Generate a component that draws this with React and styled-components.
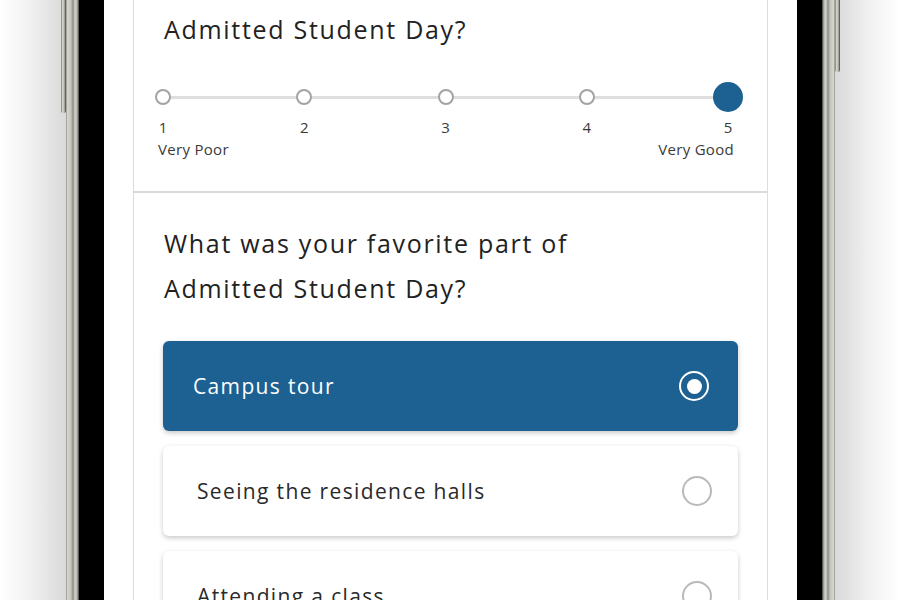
import React from "react";
import styled, { createGlobalStyle } from "styled-components";

const Global = createGlobalStyle`
    html, body { margin: 0; padding: 0; }
    body {
        width: 900px;
        height: 600px;
        overflow: hidden;
        font-family: "Open Sans", "Liberation Sans", sans-serif;
        background: #fff;
    }
`;

const Page = styled.div`
    height: 600px;
    display: flex;
    justify-content: center;
    background: linear-gradient(
        to right,
        #ffffff 0px,
        #f1f1f1 30px,
        #dadada 64px,
        #dadada 836px,
        #f1f1f1 870px,
        #ffffff 900px
    );
`;

const Phone = styled.div`
    position: relative;
    margin-left: 1px;
    width: 769px;
    display: flex;
    background: #000;
`;

const Rim = styled.div`
    width: 13px;
    flex-shrink: 0;
    background: linear-gradient(
        to ${p => (p.$side === "left" ? "right" : "left")},
        #6f6f6a 0px,
        #d8d8d0 1px,
        #c4c4bc 5px,
        #8c8c86 7px,
        #d2d2ca 9px,
        #b9b9b1 11px,
        #3a3a38 13px
    );
`;

const Bezel = styled.div`
    flex: 1;
    padding: 0 25px;
    background: #000;
    display: flex;
`;

const SideButton = styled.div`
    position: absolute;
    top: -10px;
    width: 5px;
    height: ${p => p.$h}px;
    border-radius: 0 0 2px 2px;
    background: linear-gradient(to right, #555 0, #d6d6cf 1px, #c2c2ba 3px, #444 5px);
    ${p => (p.$side === "left" ? "left: -5px;" : "right: -5px;")}
`;

const Screen = styled.div`
    flex: 1;
    background: #fff;
    overflow: hidden;
    padding: 0 29px;
`;

const Card = styled.div`
    margin-top: -66px;
    border-left: 1px solid #dcdcdc;
    border-right: 1px solid #dcdcdc;
`;

const Section = styled.div`
    padding: 28px 30px ${p => p.$bottom}px;
    & + & {
        border-top: 2px solid #dadada;
    }
`;

const Question = styled.h2`
    margin: 0;
    font-size: 25px;
    font-weight: 500;
    line-height: 45px;
    color: #222;
    letter-spacing: 1.7px;
`;

const Scale = styled.div`
    margin: 30px -6px 0 -16px;
`;

const Track = styled.div`
    position: relative;
    display: flex;
    justify-content: space-between;
    &::before {
        content: "";
        position: absolute;
        left: 15px;
        right: 15px;
        top: 14px;
        height: 3px;
        background: #dedede;
    }
`;

const Stop = styled.div`
    position: relative;
    width: 30px;
    height: 30px;
    display: flex;
    align-items: center;
    justify-content: center;
`;

const Dot = styled.span`
    box-sizing: border-box;
    width: ${p => (p.$on ? 30 : 16)}px;
    height: ${p => (p.$on ? 30 : 16)}px;
    border-radius: 50%;
    background: ${p => (p.$on ? "#1c6191" : "#fff")};
    border: ${p => (p.$on ? "none" : "2px solid #a3a3a3")};
`;

const Numbers = styled.div`
    margin-top: 5px;
    display: flex;
    justify-content: space-between;
`;

const Num = styled.span`
    width: 30px;
    text-align: center;
    font-size: 15px;
    line-height: 20px;
    color: #3a3a3a;
`;

const Ends = styled.div`
    margin: 2px 9px 0 10px;
    display: flex;
    justify-content: space-between;
    font-size: 15px;
    line-height: 20px;
    letter-spacing: 0.3px;
    color: #3a3a3a;
`;

const Options = styled.div`
    margin: 30px -1px 0;
    display: flex;
    flex-direction: column;
    gap: 15px;
`;

const Option = styled.div`
    height: 90px;
    box-sizing: border-box;
    display: flex;
    align-items: center;
    justify-content: space-between;
    padding: ${p => (p.$on ? "0 29px 0 30px" : "0 26px 0 34px")};
    border-radius: 6px;
    background: ${p => (p.$on ? "#1c6191" : "#fff")};
    color: ${p => (p.$on ? "#fff" : "#2a2a2a")};
    box-shadow: 0 2px 5px rgba(0, 0, 0, 0.22);
    font-size: 21px;
    letter-spacing: 1.35px;
`;

const Radio = styled.span`
    box-sizing: border-box;
    width: 30px;
    height: 30px;
    border-radius: 50%;
    border: 2px solid ${p => (p.$on ? "#fff" : "#b9b9b9")};
    display: flex;
    align-items: center;
    justify-content: center;
    &::after {
        content: "";
        display: ${p => (p.$on ? "block" : "none")};
        width: 15px;
        height: 15px;
        border-radius: 50%;
        background: #fff;
    }
`;

const choices = [
    { label: "Campus tour", on: true },
    { label: "Seeing the residence halls" },
    { label: "Attending a class" },
];

export default function App() {
    return (
        <Page>
            <Global />
            <Phone>
                <SideButton $side="left" $h={123} />
                <SideButton $side="right" $h={82} />
                <Rim $side="left" />
                <Bezel>
                    <Screen>
                        <Card>
                            <Section $bottom={32}>
                                <Question>
                                    How was your overall experience at
                                    <br />
                                    Admitted Student Day?
                                </Question>
                                <Scale>
                                    <Track>
                                        {[1, 2, 3, 4, 5].map(n => (
                                            <Stop key={n}>
                                                <Dot $on={n === 5} />
                                            </Stop>
                                        ))}
                                    </Track>
                                    <Numbers>
                                        {[1, 2, 3, 4, 5].map(n => (
                                            <Num key={n}>{n}</Num>
                                        ))}
                                    </Numbers>
                                    <Ends>
                                        <span>Very Poor</span>
                                        <span>Very Good</span>
                                    </Ends>
                                </Scale>
                            </Section>
                            <Section $bottom={40}>
                                <Question>
                                    What was your favorite part of
                                    <br />
                                    Admitted Student Day?
                                </Question>
                                <Options>
                                    {choices.map(c => (
                                        <Option key={c.label} $on={c.on}>
                                            <span>{c.label}</span>
                                            <Radio $on={c.on} />
                                        </Option>
                                    ))}
                                </Options>
                            </Section>
                        </Card>
                    </Screen>
                </Bezel>
                <Rim $side="right" />
            </Phone>
        </Page>
    );
}
